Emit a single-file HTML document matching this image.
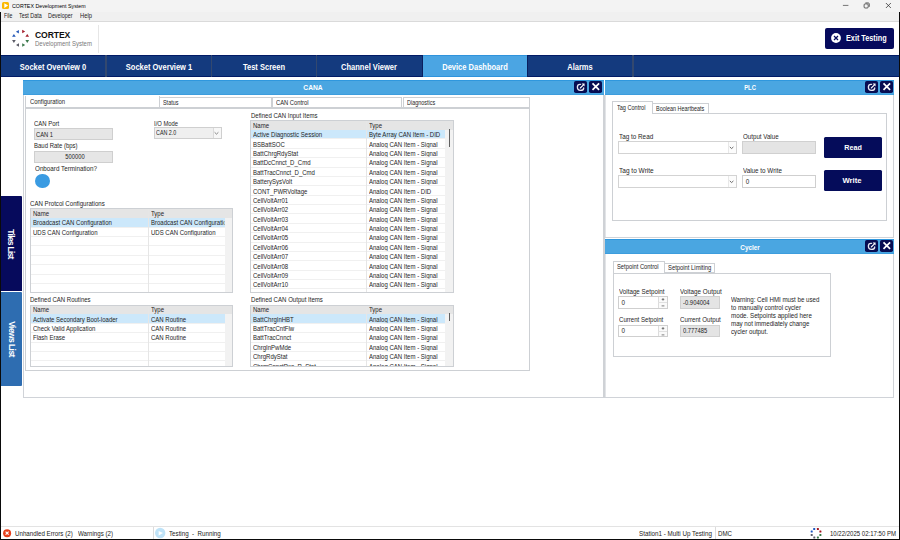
<!DOCTYPE html>
<html><head><meta charset="utf-8"><title>CORTEX Development System</title>
<style>
html,body{margin:0;padding:0;}
body{width:900px;height:540px;position:relative;overflow:hidden;background:#fff;font-family:"Liberation Sans", sans-serif;}
body div{position:absolute;}
.t{white-space:nowrap;}
svg{overflow:visible}
</style></head><body>
<div style="left:0.00px;top:0.00px;width:900.00px;height:11.60px;background:#f3f3f3"></div>
<div style="left:2.00px;top:2.00px;width:7.40px;height:7.40px;background:#fbb800;border-radius:1.5px"></div>
<svg style="position:absolute;left:2px;top:2px" width="8" height="8" viewBox="0 0 8 8"><path d="M2.3 1.3 L6.1 3.6 L2.3 5.9 Z" fill="#fff"/></svg>
<div class="t" style="left:11.90px;top:3.67px;font-size:5.7px;line-height:5.7px;color:#000;font-weight:normal;transform-origin:0 0;transform:scaleX(0.9289);">CORTEX Development System</div>
<svg style="position:absolute;left:830px;top:0" width="70" height="12" viewBox="830 0 70 12"><path d="M842.9 5.4 H848.4" stroke="#4a4a4a" stroke-width="0.75"/><rect x="864.1" y="3.9" width="4.1" height="4.1" rx="1" fill="none" stroke="#3c3c3c" stroke-width="0.8"/><path d="M865.4 2.9 H868.2 Q869.3 2.9 869.3 4 V6.8" fill="none" stroke="#3c3c3c" stroke-width="0.75"/><path d="M885.9 3 L890.9 8 M890.9 3 L885.9 8" stroke="#2c2c2c" stroke-width="0.75"/></svg>
<div style="left:0.00px;top:11.60px;width:900.00px;height:9.40px;background:#f0f0f0"></div>
<div style="left:0.00px;top:21.00px;width:900.00px;height:1.00px;background:#dadada"></div>
<div class="t" style="left:4.20px;top:12.87px;font-size:6.3px;line-height:6.3px;color:#1a1a1a;font-weight:normal;transform-origin:0 0;transform:scaleX(0.8172);">File</div>
<div class="t" style="left:19.20px;top:12.87px;font-size:6.3px;line-height:6.3px;color:#1a1a1a;font-weight:normal;transform-origin:0 0;transform:scaleX(0.8531);">Test Data</div>
<div class="t" style="left:48.30px;top:12.87px;font-size:6.3px;line-height:6.3px;color:#1a1a1a;font-weight:normal;transform-origin:0 0;transform:scaleX(0.8536);">Developer</div>
<div class="t" style="left:79.80px;top:12.87px;font-size:6.3px;line-height:6.3px;color:#1a1a1a;font-weight:normal;transform-origin:0 0;transform:scaleX(0.9187);">Help</div>
<div style="left:0.00px;top:22.00px;width:900.00px;height:33.00px;background:#ffffff"></div>
<div style="left:97.60px;top:25.00px;width:1.00px;height:27.50px;background:#e6e6e6"></div>
<svg style="position:absolute;left:0;top:21px" width="40" height="34" viewBox="0 21 40 34"><path d="M18.9 30.0 L18.9 33.5 L15.9 31.75 Z" fill="#2458b8"/><path d="M12.05 36.8 L15.75 36.8 L13.9 33.9 Z" fill="#2458b8"/><path d="M22.200000000000003 29.75 L22.200000000000003 33.25 L25.200000000000003 31.5 Z" fill="#a31f2c"/><path d="M25.4 36.8 L29.1 36.8 L27.25 33.9 Z" fill="#a31f2c"/><path d="M12.05 40.0 L15.75 40.0 L13.9 42.9 Z" fill="#5b5b66"/><path d="M19.0 43.15 L19.0 46.65 L16.0 44.9 Z" fill="#5b5b66"/><path d="M25.4 40.0 L29.1 40.0 L27.25 42.9 Z" fill="#3d7a4d"/><path d="M22.200000000000003 43.15 L22.200000000000003 46.65 L25.200000000000003 44.9 Z" fill="#3d7a4d"/></svg>
<div class="t" style="left:35.00px;top:31.12px;font-size:8.6px;line-height:8.6px;color:#101010;font-weight:bold;letter-spacing:-0.1px">CORTEX</div>
<div class="t" style="left:35.30px;top:41.27px;font-size:6.3px;line-height:6.3px;color:#7a7a7a;font-weight:normal;transform-origin:0 0;transform:scaleX(0.9506);">Development System</div>
<div style="left:825.20px;top:27.80px;width:68.60px;height:20.90px;background:#060a5c;border-radius:2px"></div>
<svg style="position:absolute;left:830px;top:32px" width="12" height="12" viewBox="0 0 12 12"><circle cx="6" cy="6" r="4.9" fill="#fff"/><path d="M4.0 4.0 L8.0 8.0 M8.0 4.0 L4.0 8.0" stroke="#060a5c" stroke-width="1.25"/></svg>
<div class="t" style="left:845.80px;top:34.38px;font-size:9px;line-height:9px;color:#ffffff;font-weight:bold;transform-origin:0 0;transform:scaleX(0.8065);">Exit Testing</div>
<div style="left:1.00px;top:55.00px;width:898.00px;height:22.20px;background:#143a7e"></div>
<div style="left:1.00px;top:55.00px;width:898.00px;height:1.20px;background:#021b66"></div>
<div style="left:1.00px;top:76.10px;width:898.00px;height:1.10px;background:#021b66"></div>
<div class="t" style="left:-96.60px;top:62.88px;width:300px;text-align:center;font-size:9px;line-height:9px;color:#ffffff;font-weight:bold;transform:scaleX(0.835)">Socket Overview 0</div>
<div class="t" style="left:8.50px;top:62.88px;width:300px;text-align:center;font-size:9px;line-height:9px;color:#ffffff;font-weight:bold;transform:scaleX(0.835)">Socket Overview 1</div>
<div class="t" style="left:113.90px;top:62.88px;width:300px;text-align:center;font-size:9px;line-height:9px;color:#ffffff;font-weight:bold;transform:scaleX(0.835)">Test Screen</div>
<div class="t" style="left:219.40px;top:62.88px;width:300px;text-align:center;font-size:9px;line-height:9px;color:#ffffff;font-weight:bold;transform:scaleX(0.835)">Channel Viewer</div>
<div style="left:422.20px;top:55.00px;width:105.40px;height:22.20px;background:#4ba5e3"></div>
<div style="left:422.20px;top:55.00px;width:105.40px;height:1.20px;background:#2f93dc"></div>
<div style="left:422.20px;top:76.10px;width:105.40px;height:1.10px;background:#2f93dc"></div>
<div class="t" style="left:324.90px;top:62.88px;width:300px;text-align:center;font-size:9px;line-height:9px;color:#ffffff;font-weight:bold;transform:scaleX(0.835)">Device Dashboard</div>
<div class="t" style="left:430.30px;top:62.88px;width:300px;text-align:center;font-size:9px;line-height:9px;color:#ffffff;font-weight:bold;transform:scaleX(0.835)">Alarms</div>
<div style="left:105.20px;top:55.00px;width:1.40px;height:22.20px;background:#33486f"></div>
<div style="left:210.60px;top:55.00px;width:1.40px;height:22.20px;background:#33486f"></div>
<div style="left:316.00px;top:55.00px;width:1.40px;height:22.20px;background:#33486f"></div>
<div style="left:421.60px;top:55.00px;width:1.40px;height:22.20px;background:#0a1f5e"></div>
<div style="left:527.00px;top:55.00px;width:1.40px;height:22.20px;background:#0a1f5e"></div>
<div style="left:632.40px;top:55.00px;width:1.40px;height:22.20px;background:#33486f"></div>
<div style="left:0.00px;top:11.70px;width:1.10px;height:528.30px;background:#0a0a0a"></div>
<div style="left:898.80px;top:11.70px;width:1.20px;height:528.30px;background:#0a0a0a"></div>
<div style="left:0.00px;top:538.80px;width:900.00px;height:1.20px;background:#0a0a0a"></div>
<div style="left:1.10px;top:526.00px;width:897.70px;height:1.00px;background:#e3e3e3"></div>
<svg style="position:absolute;left:2px;top:528px" width="11" height="11" viewBox="0 0 11 11"><circle cx="5.1" cy="5.2" r="4" fill="#e8401c"/><path d="M3.6 3.7 L6.6 6.7 M6.6 3.7 L3.6 6.7" stroke="#fff" stroke-width="1.2"/></svg>
<div class="t" style="left:15.30px;top:531.07px;font-size:6.3px;line-height:6.3px;color:#222;font-weight:normal;transform-origin:0 0;transform:scaleX(0.9813);">Unhandled Errors (2)</div>
<div class="t" style="left:78.00px;top:531.07px;font-size:6.3px;line-height:6.3px;color:#222;font-weight:normal;transform-origin:0 0;transform:scaleX(0.9773);">Warnings (2)</div>
<div style="left:152.50px;top:527.00px;width:1.00px;height:11.80px;background:#dcdcdc"></div>
<svg style="position:absolute;left:150px;top:524px" width="20" height="16" viewBox="150 524 20 16"><circle cx="160.2" cy="533" r="5.2" fill="#bfe3f8"/><path d="M158.7 530.9 L163 533.1 L158.7 535.4 Z" fill="#fff"/></svg>
<div class="t" style="left:169.30px;top:531.07px;font-size:6.3px;line-height:6.3px;color:#222;font-weight:normal;transform-origin:0 0;transform:scaleX(0.9845);">Testing&nbsp;&nbsp;-&nbsp;&nbsp;Running</div>
<div class="t" style="left:638.70px;top:531.07px;font-size:6.3px;line-height:6.3px;color:#222;font-weight:normal;transform-origin:0 0;transform:scaleX(0.9933);">Station1 - Multi Up Testing</div>
<div style="left:714.80px;top:527.00px;width:1.00px;height:11.80px;background:#dcdcdc"></div>
<div class="t" style="left:718.00px;top:531.07px;font-size:6.3px;line-height:6.3px;color:#222;font-weight:normal;transform-origin:0 0;transform:scaleX(0.9760);">DMC</div>
<svg style="position:absolute;left:808px;top:526px" width="16" height="14" viewBox="808 526 16 14"><rect x="813.2" y="528.0" width="2" height="2" rx="0.5" fill="#1a55c0"/><rect x="810.7" y="530.6" width="2" height="2" rx="0.5" fill="#1a55c0"/><rect x="816.9" y="527.9" width="2" height="2" rx="0.5" fill="#a3101c"/><rect x="819.4" y="530.6" width="2" height="2" rx="0.5" fill="#a3101c"/><rect x="810.7" y="534.1" width="2" height="2" rx="0.5" fill="#5e5e6c"/><rect x="813.3" y="536.5" width="2" height="2" rx="0.5" fill="#5e5e6c"/><rect x="819.4" y="534.1" width="2" height="2" rx="0.5" fill="#3a7a48"/><rect x="816.9" y="536.5" width="2" height="2" rx="0.5" fill="#3a7a48"/></svg>
<div class="t" style="left:830.00px;top:531.07px;font-size:6.3px;line-height:6.3px;color:#222;font-weight:normal;transform-origin:0 0;transform:scaleX(0.9567);">10/22/2025 02:17:50 PM</div>
<div style="left:1.10px;top:196.30px;width:20.90px;height:94.70px;background:#060a5c;border-radius:0 1px 0 0"></div>
<div style="left:1.10px;top:291.50px;width:20.90px;height:94.50px;background:#2e6db1;border-radius:0 1px 1px 0"></div>
<div style="left:-29.10px;top:233.90px;width:80px;height:20px;transform:rotate(90deg)"><div class="t" style="left:0;top:5.86px;width:80px;text-align:center;font-size:8.5px;line-height:8.5px;color:#fff;font-weight:bold;letter-spacing:-0.730px">Tiles List</div></div>
<div style="left:-28.50px;top:328.50px;width:80px;height:20px;transform:rotate(90deg)"><div class="t" style="left:0;top:5.86px;width:80px;text-align:center;font-size:8.5px;line-height:8.5px;color:#fff;font-weight:bold;letter-spacing:-0.582px">Views List</div></div>
<div style="left:23.00px;top:95.00px;width:581.20px;height:302.80px;background:#fff;border:1px solid #d0d3d8;border-top:none;box-sizing:border-box"></div>
<div style="left:23.00px;top:80.00px;width:580.70px;height:15.00px;background:#4aa6e1"></div>
<div style="left:23.00px;top:80.00px;width:580.70px;height:1.00px;background:#2f97dd"></div>
<div style="left:23.00px;top:93.80px;width:580.70px;height:1.20px;background:#3d9ddd"></div>
<div class="t" style="left:163.35px;top:84.13px;width:300px;text-align:center;font-size:8px;line-height:8px;color:#ffffff;font-weight:bold;transform:scaleX(0.8352);">CANA</div>
<div style="left:574.30px;top:81.10px;width:13.20px;height:12.00px;background:#070d52;border-radius:1.8px"></div>
<div style="left:589.10px;top:81.10px;width:13.40px;height:12.00px;background:#070d52;border-radius:1.8px"></div>
<svg style="position:absolute;left:574.30px;top:81.10px" width="14" height="12" viewBox="0 0 14 12"><path d="M6.6 3.3 H5.9 Q3.4 3.3 3.4 6.1 Q3.4 9.4 6.4 9.4 Q9.7 9.4 9.7 6.9" fill="none" stroke="#e8e8f0" stroke-width="1.35" stroke-linecap="round"/><path d="M6.3 7 L9.2 4.1" stroke="#fff" stroke-width="1.1" stroke-linecap="round"/><path d="M7.6 2.5 L10.6 2.4 L10.5 5.4 Z" fill="#fff"/></svg>
<svg style="position:absolute;left:589.10px;top:81.10px" width="14" height="12" viewBox="0 0 14 12"><path d="M3.5 2.3 L10.1 8.9 M10.1 2.3 L3.5 8.9" stroke="#fff" stroke-width="1.7"/></svg>
<div style="left:604.20px;top:95.00px;width:290.00px;height:143.00px;background:#fff;border:1px solid #d0d3d8;border-top:none;box-sizing:border-box"></div>
<div style="left:605.20px;top:80.00px;width:289.00px;height:15.00px;background:#4aa6e1"></div>
<div style="left:605.20px;top:80.00px;width:289.00px;height:1.00px;background:#2f97dd"></div>
<div style="left:605.20px;top:93.80px;width:289.00px;height:1.20px;background:#3d9ddd"></div>
<div class="t" style="left:599.70px;top:84.13px;width:300px;text-align:center;font-size:8px;line-height:8px;color:#ffffff;font-weight:bold;transform:scaleX(0.7312);">PLC</div>
<div style="left:864.80px;top:81.10px;width:13.20px;height:12.00px;background:#070d52;border-radius:1.8px"></div>
<div style="left:879.60px;top:81.10px;width:13.40px;height:12.00px;background:#070d52;border-radius:1.8px"></div>
<svg style="position:absolute;left:864.80px;top:81.10px" width="14" height="12" viewBox="0 0 14 12"><path d="M6.6 3.3 H5.9 Q3.4 3.3 3.4 6.1 Q3.4 9.4 6.4 9.4 Q9.7 9.4 9.7 6.9" fill="none" stroke="#e8e8f0" stroke-width="1.35" stroke-linecap="round"/><path d="M6.3 7 L9.2 4.1" stroke="#fff" stroke-width="1.1" stroke-linecap="round"/><path d="M7.6 2.5 L10.6 2.4 L10.5 5.4 Z" fill="#fff"/></svg>
<svg style="position:absolute;left:879.60px;top:81.10px" width="14" height="12" viewBox="0 0 14 12"><path d="M3.5 2.3 L10.1 8.9 M10.1 2.3 L3.5 8.9" stroke="#fff" stroke-width="1.7"/></svg>
<div style="left:604.20px;top:254.40px;width:290.00px;height:143.40px;background:#fff;border:1px solid #d0d3d8;border-top:none;box-sizing:border-box"></div>
<div style="left:605.20px;top:239.00px;width:289.00px;height:15.40px;background:#4aa6e1"></div>
<div style="left:605.20px;top:239.00px;width:289.00px;height:1.00px;background:#2f97dd"></div>
<div style="left:605.20px;top:253.20px;width:289.00px;height:1.20px;background:#3d9ddd"></div>
<div class="t" style="left:599.70px;top:243.83px;width:300px;text-align:center;font-size:8px;line-height:8px;color:#ffffff;font-weight:bold;transform:scaleX(0.7928);">Cycler</div>
<div style="left:864.80px;top:240.10px;width:13.20px;height:12.40px;background:#070d52;border-radius:1.8px"></div>
<div style="left:879.60px;top:240.10px;width:13.40px;height:12.40px;background:#070d52;border-radius:1.8px"></div>
<svg style="position:absolute;left:864.80px;top:240.10px" width="14" height="12" viewBox="0 0 14 12"><path d="M6.6 3.3 H5.9 Q3.4 3.3 3.4 6.1 Q3.4 9.4 6.4 9.4 Q9.7 9.4 9.7 6.9" fill="none" stroke="#e8e8f0" stroke-width="1.35" stroke-linecap="round"/><path d="M6.3 7 L9.2 4.1" stroke="#fff" stroke-width="1.1" stroke-linecap="round"/><path d="M7.6 2.5 L10.6 2.4 L10.5 5.4 Z" fill="#fff"/></svg>
<svg style="position:absolute;left:879.60px;top:240.10px" width="14" height="12" viewBox="0 0 14 12"><path d="M3.5 2.3 L10.1 8.9 M10.1 2.3 L3.5 8.9" stroke="#fff" stroke-width="1.7"/></svg>
<div style="left:603.00px;top:95.00px;width:2.00px;height:302.80px;background:#cfd2d6"></div>
<div style="left:605.00px;top:95.00px;width:1.00px;height:142.40px;background:#e2e4e7"></div>
<div style="left:605.00px;top:254.40px;width:1.00px;height:143.00px;background:#e2e4e7"></div>
<div style="left:25.30px;top:108.00px;width:504.70px;height:262.50px;background:#fff;border:1px solid #cdd0d4;box-sizing:border-box"></div>
<div style="left:159.30px;top:97.20px;width:112.70px;height:11.20px;background:#fff;border:1px solid #cdd0d4;box-sizing:border-box"></div>
<div style="left:271.60px;top:97.20px;width:130.90px;height:11.20px;background:#fff;border:1px solid #cdd0d4;box-sizing:border-box"></div>
<div style="left:402.50px;top:97.20px;width:127.50px;height:11.20px;background:#fff;border:1px solid #cdd0d4;box-sizing:border-box"></div>
<div style="left:25.30px;top:96.00px;width:134.50px;height:12.40px;background:#fff;border:1px solid #cdd0d4;border-top:none;box-sizing:border-box"></div>
<div style="left:25.30px;top:107.40px;width:504.70px;height:1.00px;background:#cdd0d4"></div>
<div class="t" style="left:29.80px;top:99.01px;font-size:6.3px;line-height:6.3px;color:#1e1e1e;font-weight:normal;transform-origin:0 0;transform:scaleX(0.9368);">Configuration</div>
<div class="t" style="left:163.30px;top:99.91px;font-size:6.3px;line-height:6.3px;color:#1e1e1e;font-weight:normal;transform-origin:0 0;transform:scaleX(0.8623);">Status</div>
<div class="t" style="left:276.40px;top:99.81px;font-size:6.3px;line-height:6.3px;color:#1e1e1e;font-weight:normal;transform-origin:0 0;transform:scaleX(0.9195);">CAN Control</div>
<div class="t" style="left:406.70px;top:99.91px;font-size:6.3px;line-height:6.3px;color:#1e1e1e;font-weight:normal;transform-origin:0 0;transform:scaleX(0.8691);">Diagnostics</div>
<div class="t" style="left:34.20px;top:121.21px;font-size:6.3px;line-height:6.3px;color:#1e1e1e;font-weight:normal;transform-origin:0 0;transform:scaleX(0.9476);">CAN Port</div>
<div style="left:33.90px;top:128.30px;width:78.80px;height:12.20px;background:#e6e6e6;border:1px solid #cfcfcf;box-sizing:border-box"></div>
<div class="t" style="left:36.20px;top:131.71px;font-size:6.3px;line-height:6.3px;color:#1e1e1e;font-weight:normal;transform-origin:0 0;transform:scaleX(0.9166);">CAN 1</div>
<div class="t" style="left:34.00px;top:143.41px;font-size:6.3px;line-height:6.3px;color:#1e1e1e;font-weight:normal;transform-origin:0 0;transform:scaleX(0.9507);">Baud Rate (bps)</div>
<div style="left:33.90px;top:150.60px;width:78.80px;height:12.10px;background:#e6e6e6;border:1px solid #cfcfcf;box-sizing:border-box"></div>
<div class="t" style="left:44.65px;top:153.87px;width:60px;text-align:center;font-size:6.3px;line-height:6.3px;color:#1e1e1e;font-weight:normal;transform:scaleX(0.9184);">500000</div>
<div class="t" style="left:35.00px;top:166.31px;font-size:6.3px;line-height:6.3px;color:#1e1e1e;font-weight:normal;transform-origin:0 0;transform:scaleX(0.9967);">Onboard Termination?</div>
<div style="left:35px;top:174px;width:14.6px;height:14.4px;border-radius:50%;background:#3a9be2"></div>
<div class="t" style="left:153.90px;top:120.81px;font-size:6.3px;line-height:6.3px;color:#1e1e1e;font-weight:normal;transform-origin:0 0;transform:scaleX(0.9303);">I/O Mode</div>
<div style="left:153.70px;top:127.00px;width:68.00px;height:12.20px;background:#efefef;border:1px solid #cfcfcf;box-sizing:border-box"></div>
<div style="left:212.60px;top:128.00px;width:8.10px;height:10.20px;background:#f7f7f7;border-left:1px solid #dadada;box-sizing:border-box"></div>
<svg style="position:absolute;left:212px;top:128px" width="9" height="10" viewBox="0 0 9 10"><path d="M2.6 4.3 L4.5 6.1 L6.4 4.3" fill="none" stroke="#555" stroke-width="0.7"/></svg>
<div class="t" style="left:155.60px;top:129.61px;font-size:6.3px;line-height:6.3px;color:#1e1e1e;font-weight:normal;transform-origin:0 0;transform:scaleX(0.8525);">CAN 2.0</div>
<div class="t" style="left:30.40px;top:200.91px;font-size:6.3px;line-height:6.3px;color:#1e1e1e;font-weight:normal;transform-origin:0 0;transform:scaleX(0.9714);">CAN Protcol Configurations</div>
<div style="left:29.9px;top:208.4px;width:203.40px;height:84.60px;background:#fff;overflow:hidden">
<div style="left:0;top:0;width:203.40px;height:9.45px;background:#e5e5e5"></div>
<div style="left:195.10px;top:9.45px;width:8.3px;height:84.60px;background:#f2f2f2"></div>
<div class="t" style="left:3.10px;top:2.64px;font-size:6.3px;line-height:6.3px;transform-origin:0 0;transform:scaleX(0.955);color:#1e1e1e">Name</div>
<div class="t" style="left:121.10px;top:2.64px;font-size:6.3px;line-height:6.3px;transform-origin:0 0;transform:scaleX(0.955);color:#1e1e1e">Type</div>
<div style="left:0;top:9.45px;width:195.10px;height:9.38px;background:#cce8fb"></div>
<div style="left:0;top:18.23px;width:195.10px;height:1px;background:#f0f0f0"></div>
<div class="t" style="left:3.10px;top:12.05px;font-size:6.3px;line-height:6.3px;transform-origin:0 0;transform:scaleX(0.955);color:#1e1e1e">Broadcast CAN Configuration</div>
<div class="t" style="left:121.10px;top:12.05px;width:77.49px;overflow:hidden;font-size:6.3px;line-height:6.3px;transform-origin:0 0;transform:scaleX(0.955);color:#1e1e1e">Broadcast CAN Configuration</div>
<div style="left:0;top:27.61px;width:195.10px;height:1px;background:#f0f0f0"></div>
<div class="t" style="left:3.10px;top:21.43px;font-size:6.3px;line-height:6.3px;transform-origin:0 0;transform:scaleX(0.955);color:#1e1e1e">UDS CAN Configuration</div>
<div class="t" style="left:121.10px;top:21.43px;width:77.49px;overflow:hidden;font-size:6.3px;line-height:6.3px;transform-origin:0 0;transform:scaleX(0.955);color:#1e1e1e">UDS CAN Configuration</div>
<div style="left:0;top:36.99px;width:195.10px;height:1px;background:#f0f0f0"></div>
<div style="left:0;top:46.37px;width:195.10px;height:1px;background:#f0f0f0"></div>
<div style="left:0;top:55.75px;width:195.10px;height:1px;background:#f0f0f0"></div>
<div style="left:0;top:65.13px;width:195.10px;height:1px;background:#f0f0f0"></div>
<div style="left:0;top:74.51px;width:195.10px;height:1px;background:#f0f0f0"></div>
<div style="left:0;top:83.89px;width:195.10px;height:1px;background:#f0f0f0"></div>
<div style="left:0;top:93.27px;width:195.10px;height:1px;background:#f0f0f0"></div>
<div style="left:118.10px;top:0;width:1px;height:84.60px;background:#e6e6e6"></div>
<div style="left:0;top:0;width:203.40px;height:84.60px;border:1px solid #cdd0d4;box-sizing:border-box"></div>
</div>
<div class="t" style="left:30.40px;top:297.11px;font-size:6.3px;line-height:6.3px;color:#1e1e1e;font-weight:normal;transform-origin:0 0;transform:scaleX(0.9564);">Defined CAN Routines</div>
<div style="left:29.9px;top:304.7px;width:203.40px;height:62.10px;background:#fff;overflow:hidden">
<div style="left:0;top:0;width:203.40px;height:9.45px;background:#e5e5e5"></div>
<div style="left:195.10px;top:9.45px;width:8.3px;height:62.10px;background:#f2f2f2"></div>
<div class="t" style="left:3.10px;top:2.64px;font-size:6.3px;line-height:6.3px;transform-origin:0 0;transform:scaleX(0.955);color:#1e1e1e">Name</div>
<div class="t" style="left:121.10px;top:2.64px;font-size:6.3px;line-height:6.3px;transform-origin:0 0;transform:scaleX(0.955);color:#1e1e1e">Type</div>
<div style="left:0;top:9.45px;width:195.10px;height:9.38px;background:#cce8fb"></div>
<div style="left:0;top:18.23px;width:195.10px;height:1px;background:#f0f0f0"></div>
<div class="t" style="left:3.10px;top:12.05px;font-size:6.3px;line-height:6.3px;transform-origin:0 0;transform:scaleX(0.955);color:#1e1e1e">Activate Secondary Boot-loader</div>
<div class="t" style="left:121.10px;top:12.05px;width:77.49px;overflow:hidden;font-size:6.3px;line-height:6.3px;transform-origin:0 0;transform:scaleX(0.955);color:#1e1e1e">CAN Routine</div>
<div style="left:0;top:27.61px;width:195.10px;height:1px;background:#f0f0f0"></div>
<div class="t" style="left:3.10px;top:21.43px;font-size:6.3px;line-height:6.3px;transform-origin:0 0;transform:scaleX(0.955);color:#1e1e1e">Check Valid Application</div>
<div class="t" style="left:121.10px;top:21.43px;width:77.49px;overflow:hidden;font-size:6.3px;line-height:6.3px;transform-origin:0 0;transform:scaleX(0.955);color:#1e1e1e">CAN Routine</div>
<div style="left:0;top:36.99px;width:195.10px;height:1px;background:#f0f0f0"></div>
<div class="t" style="left:3.10px;top:30.81px;font-size:6.3px;line-height:6.3px;transform-origin:0 0;transform:scaleX(0.955);color:#1e1e1e">Flash Erase</div>
<div class="t" style="left:121.10px;top:30.81px;width:77.49px;overflow:hidden;font-size:6.3px;line-height:6.3px;transform-origin:0 0;transform:scaleX(0.955);color:#1e1e1e">CAN Routine</div>
<div style="left:0;top:46.37px;width:195.10px;height:1px;background:#f0f0f0"></div>
<div style="left:0;top:55.75px;width:195.10px;height:1px;background:#f0f0f0"></div>
<div style="left:0;top:65.13px;width:195.10px;height:1px;background:#f0f0f0"></div>
<div style="left:118.10px;top:0;width:1px;height:62.10px;background:#e6e6e6"></div>
<div style="left:0;top:0;width:203.40px;height:62.10px;border:1px solid #cdd0d4;box-sizing:border-box"></div>
</div>
<div class="t" style="left:250.60px;top:112.71px;font-size:6.3px;line-height:6.3px;color:#1e1e1e;font-weight:normal;transform-origin:0 0;transform:scaleX(0.9547);">Defined CAN Input Items</div>
<div style="left:250.2px;top:120.2px;width:203.40px;height:173.00px;background:#fff;overflow:hidden">
<div style="left:0;top:0;width:203.40px;height:9.45px;background:#e5e5e5"></div>
<div style="left:195.10px;top:9.45px;width:8.3px;height:173.00px;background:#f2f2f2"></div>
<div class="t" style="left:3.10px;top:2.64px;font-size:6.3px;line-height:6.3px;transform-origin:0 0;transform:scaleX(0.955);color:#1e1e1e">Name</div>
<div class="t" style="left:118.80px;top:2.64px;font-size:6.3px;line-height:6.3px;transform-origin:0 0;transform:scaleX(0.955);color:#1e1e1e">Type</div>
<div style="left:0;top:9.45px;width:195.10px;height:9.38px;background:#cce8fb"></div>
<div style="left:0;top:18.23px;width:195.10px;height:1px;background:#f0f0f0"></div>
<div class="t" style="left:3.10px;top:12.05px;font-size:6.3px;line-height:6.3px;transform-origin:0 0;transform:scaleX(0.955);color:#1e1e1e">Active Diagnostic Session</div>
<div class="t" style="left:118.80px;top:12.05px;width:79.90px;overflow:hidden;font-size:6.3px;line-height:6.3px;transform-origin:0 0;transform:scaleX(0.955);color:#1e1e1e">Byte Array CAN Item - DID</div>
<div style="left:0;top:27.61px;width:195.10px;height:1px;background:#f0f0f0"></div>
<div class="t" style="left:3.10px;top:21.43px;font-size:6.3px;line-height:6.3px;transform-origin:0 0;transform:scaleX(0.955);color:#1e1e1e">BSBattSOC</div>
<div class="t" style="left:118.80px;top:21.43px;width:79.90px;overflow:hidden;font-size:6.3px;line-height:6.3px;transform-origin:0 0;transform:scaleX(0.955);color:#1e1e1e">Analog CAN Item - Signal</div>
<div style="left:0;top:36.99px;width:195.10px;height:1px;background:#f0f0f0"></div>
<div class="t" style="left:3.10px;top:30.81px;font-size:6.3px;line-height:6.3px;transform-origin:0 0;transform:scaleX(0.955);color:#1e1e1e">BattChrgRdyStat</div>
<div class="t" style="left:118.80px;top:30.81px;width:79.90px;overflow:hidden;font-size:6.3px;line-height:6.3px;transform-origin:0 0;transform:scaleX(0.955);color:#1e1e1e">Analog CAN Item - Signal</div>
<div style="left:0;top:46.37px;width:195.10px;height:1px;background:#f0f0f0"></div>
<div class="t" style="left:3.10px;top:40.19px;font-size:6.3px;line-height:6.3px;transform-origin:0 0;transform:scaleX(0.955);color:#1e1e1e">BattDcCnnct_D_Cmd</div>
<div class="t" style="left:118.80px;top:40.19px;width:79.90px;overflow:hidden;font-size:6.3px;line-height:6.3px;transform-origin:0 0;transform:scaleX(0.955);color:#1e1e1e">Analog CAN Item - Signal</div>
<div style="left:0;top:55.75px;width:195.10px;height:1px;background:#f0f0f0"></div>
<div class="t" style="left:3.10px;top:49.57px;font-size:6.3px;line-height:6.3px;transform-origin:0 0;transform:scaleX(0.955);color:#1e1e1e">BattTracCnnct_D_Cmd</div>
<div class="t" style="left:118.80px;top:49.57px;width:79.90px;overflow:hidden;font-size:6.3px;line-height:6.3px;transform-origin:0 0;transform:scaleX(0.955);color:#1e1e1e">Analog CAN Item - Signal</div>
<div style="left:0;top:65.13px;width:195.10px;height:1px;background:#f0f0f0"></div>
<div class="t" style="left:3.10px;top:58.95px;font-size:6.3px;line-height:6.3px;transform-origin:0 0;transform:scaleX(0.955);color:#1e1e1e">BatterySysVolt</div>
<div class="t" style="left:118.80px;top:58.95px;width:79.90px;overflow:hidden;font-size:6.3px;line-height:6.3px;transform-origin:0 0;transform:scaleX(0.955);color:#1e1e1e">Analog CAN Item - Signal</div>
<div style="left:0;top:74.51px;width:195.10px;height:1px;background:#f0f0f0"></div>
<div class="t" style="left:3.10px;top:68.33px;font-size:6.3px;line-height:6.3px;transform-origin:0 0;transform:scaleX(0.955);color:#1e1e1e">CONT_PWRVoltage</div>
<div class="t" style="left:118.80px;top:68.33px;width:79.90px;overflow:hidden;font-size:6.3px;line-height:6.3px;transform-origin:0 0;transform:scaleX(0.955);color:#1e1e1e">Analog CAN Item - DID</div>
<div style="left:0;top:83.89px;width:195.10px;height:1px;background:#f0f0f0"></div>
<div class="t" style="left:3.10px;top:77.71px;font-size:6.3px;line-height:6.3px;transform-origin:0 0;transform:scaleX(0.955);color:#1e1e1e">CellVoltArr01</div>
<div class="t" style="left:118.80px;top:77.71px;width:79.90px;overflow:hidden;font-size:6.3px;line-height:6.3px;transform-origin:0 0;transform:scaleX(0.955);color:#1e1e1e">Analog CAN Item - Signal</div>
<div style="left:0;top:93.27px;width:195.10px;height:1px;background:#f0f0f0"></div>
<div class="t" style="left:3.10px;top:87.09px;font-size:6.3px;line-height:6.3px;transform-origin:0 0;transform:scaleX(0.955);color:#1e1e1e">CellVoltArr02</div>
<div class="t" style="left:118.80px;top:87.09px;width:79.90px;overflow:hidden;font-size:6.3px;line-height:6.3px;transform-origin:0 0;transform:scaleX(0.955);color:#1e1e1e">Analog CAN Item - Signal</div>
<div style="left:0;top:102.65px;width:195.10px;height:1px;background:#f0f0f0"></div>
<div class="t" style="left:3.10px;top:96.47px;font-size:6.3px;line-height:6.3px;transform-origin:0 0;transform:scaleX(0.955);color:#1e1e1e">CellVoltArr03</div>
<div class="t" style="left:118.80px;top:96.47px;width:79.90px;overflow:hidden;font-size:6.3px;line-height:6.3px;transform-origin:0 0;transform:scaleX(0.955);color:#1e1e1e">Analog CAN Item - Signal</div>
<div style="left:0;top:112.03px;width:195.10px;height:1px;background:#f0f0f0"></div>
<div class="t" style="left:3.10px;top:105.85px;font-size:6.3px;line-height:6.3px;transform-origin:0 0;transform:scaleX(0.955);color:#1e1e1e">CellVoltArr04</div>
<div class="t" style="left:118.80px;top:105.85px;width:79.90px;overflow:hidden;font-size:6.3px;line-height:6.3px;transform-origin:0 0;transform:scaleX(0.955);color:#1e1e1e">Analog CAN Item - Signal</div>
<div style="left:0;top:121.41px;width:195.10px;height:1px;background:#f0f0f0"></div>
<div class="t" style="left:3.10px;top:115.23px;font-size:6.3px;line-height:6.3px;transform-origin:0 0;transform:scaleX(0.955);color:#1e1e1e">CellVoltArr05</div>
<div class="t" style="left:118.80px;top:115.23px;width:79.90px;overflow:hidden;font-size:6.3px;line-height:6.3px;transform-origin:0 0;transform:scaleX(0.955);color:#1e1e1e">Analog CAN Item - Signal</div>
<div style="left:0;top:130.79px;width:195.10px;height:1px;background:#f0f0f0"></div>
<div class="t" style="left:3.10px;top:124.61px;font-size:6.3px;line-height:6.3px;transform-origin:0 0;transform:scaleX(0.955);color:#1e1e1e">CellVoltArr06</div>
<div class="t" style="left:118.80px;top:124.61px;width:79.90px;overflow:hidden;font-size:6.3px;line-height:6.3px;transform-origin:0 0;transform:scaleX(0.955);color:#1e1e1e">Analog CAN Item - Signal</div>
<div style="left:0;top:140.17px;width:195.10px;height:1px;background:#f0f0f0"></div>
<div class="t" style="left:3.10px;top:133.99px;font-size:6.3px;line-height:6.3px;transform-origin:0 0;transform:scaleX(0.955);color:#1e1e1e">CellVoltArr07</div>
<div class="t" style="left:118.80px;top:133.99px;width:79.90px;overflow:hidden;font-size:6.3px;line-height:6.3px;transform-origin:0 0;transform:scaleX(0.955);color:#1e1e1e">Analog CAN Item - Signal</div>
<div style="left:0;top:149.55px;width:195.10px;height:1px;background:#f0f0f0"></div>
<div class="t" style="left:3.10px;top:143.37px;font-size:6.3px;line-height:6.3px;transform-origin:0 0;transform:scaleX(0.955);color:#1e1e1e">CellVoltArr08</div>
<div class="t" style="left:118.80px;top:143.37px;width:79.90px;overflow:hidden;font-size:6.3px;line-height:6.3px;transform-origin:0 0;transform:scaleX(0.955);color:#1e1e1e">Analog CAN Item - Signal</div>
<div style="left:0;top:158.93px;width:195.10px;height:1px;background:#f0f0f0"></div>
<div class="t" style="left:3.10px;top:152.75px;font-size:6.3px;line-height:6.3px;transform-origin:0 0;transform:scaleX(0.955);color:#1e1e1e">CellVoltArr09</div>
<div class="t" style="left:118.80px;top:152.75px;width:79.90px;overflow:hidden;font-size:6.3px;line-height:6.3px;transform-origin:0 0;transform:scaleX(0.955);color:#1e1e1e">Analog CAN Item - Signal</div>
<div style="left:0;top:168.31px;width:195.10px;height:1px;background:#f0f0f0"></div>
<div class="t" style="left:3.10px;top:162.13px;font-size:6.3px;line-height:6.3px;transform-origin:0 0;transform:scaleX(0.955);color:#1e1e1e">CellVoltArr10</div>
<div class="t" style="left:118.80px;top:162.13px;width:79.90px;overflow:hidden;font-size:6.3px;line-height:6.3px;transform-origin:0 0;transform:scaleX(0.955);color:#1e1e1e">Analog CAN Item - Signal</div>
<div style="left:0;top:177.69px;width:195.10px;height:1px;background:#f0f0f0"></div>
<div class="t" style="left:3.10px;top:171.51px;font-size:6.3px;line-height:6.3px;transform-origin:0 0;transform:scaleX(0.955);color:#1e1e1e">CellVoltArr11</div>
<div class="t" style="left:118.80px;top:171.51px;width:79.90px;overflow:hidden;font-size:6.3px;line-height:6.3px;transform-origin:0 0;transform:scaleX(0.955);color:#1e1e1e">Analog CAN Item - Signal</div>
<div style="left:115.80px;top:0;width:1px;height:173.00px;background:#e6e6e6"></div>
<div style="left:198.60px;top:8.50px;width:1.4px;height:18.00px;background:#606060"></div>
<div style="left:0;top:0;width:203.40px;height:173.00px;border:1px solid #cdd0d4;box-sizing:border-box"></div>
</div>
<div class="t" style="left:250.60px;top:297.11px;font-size:6.3px;line-height:6.3px;color:#1e1e1e;font-weight:normal;transform-origin:0 0;transform:scaleX(0.9645);">Defined CAN Output Items</div>
<div style="left:250.2px;top:304.7px;width:203.40px;height:62.10px;background:#fff;overflow:hidden">
<div style="left:0;top:0;width:203.40px;height:9.45px;background:#e5e5e5"></div>
<div style="left:195.10px;top:9.45px;width:8.3px;height:62.10px;background:#f2f2f2"></div>
<div class="t" style="left:3.10px;top:2.64px;font-size:6.3px;line-height:6.3px;transform-origin:0 0;transform:scaleX(0.955);color:#1e1e1e">Name</div>
<div class="t" style="left:118.80px;top:2.64px;font-size:6.3px;line-height:6.3px;transform-origin:0 0;transform:scaleX(0.955);color:#1e1e1e">Type</div>
<div style="left:0;top:9.45px;width:195.10px;height:9.38px;background:#cce8fb"></div>
<div style="left:0;top:18.23px;width:195.10px;height:1px;background:#f0f0f0"></div>
<div class="t" style="left:3.10px;top:12.05px;font-size:6.3px;line-height:6.3px;transform-origin:0 0;transform:scaleX(0.955);color:#1e1e1e">BattChrgInHBT</div>
<div class="t" style="left:118.80px;top:12.05px;width:79.90px;overflow:hidden;font-size:6.3px;line-height:6.3px;transform-origin:0 0;transform:scaleX(0.955);color:#1e1e1e">Analog CAN Item - Signal</div>
<div style="left:0;top:27.61px;width:195.10px;height:1px;background:#f0f0f0"></div>
<div class="t" style="left:3.10px;top:21.43px;font-size:6.3px;line-height:6.3px;transform-origin:0 0;transform:scaleX(0.955);color:#1e1e1e">BattTracCntFlw</div>
<div class="t" style="left:118.80px;top:21.43px;width:79.90px;overflow:hidden;font-size:6.3px;line-height:6.3px;transform-origin:0 0;transform:scaleX(0.955);color:#1e1e1e">Analog CAN Item - Signal</div>
<div style="left:0;top:36.99px;width:195.10px;height:1px;background:#f0f0f0"></div>
<div class="t" style="left:3.10px;top:30.81px;font-size:6.3px;line-height:6.3px;transform-origin:0 0;transform:scaleX(0.955);color:#1e1e1e">BattTracCnnct</div>
<div class="t" style="left:118.80px;top:30.81px;width:79.90px;overflow:hidden;font-size:6.3px;line-height:6.3px;transform-origin:0 0;transform:scaleX(0.955);color:#1e1e1e">Analog CAN Item - Signal</div>
<div style="left:0;top:46.37px;width:195.10px;height:1px;background:#f0f0f0"></div>
<div class="t" style="left:3.10px;top:40.19px;font-size:6.3px;line-height:6.3px;transform-origin:0 0;transform:scaleX(0.955);color:#1e1e1e">ChrgInPwMde</div>
<div class="t" style="left:118.80px;top:40.19px;width:79.90px;overflow:hidden;font-size:6.3px;line-height:6.3px;transform-origin:0 0;transform:scaleX(0.955);color:#1e1e1e">Analog CAN Item - Signal</div>
<div style="left:0;top:55.75px;width:195.10px;height:1px;background:#f0f0f0"></div>
<div class="t" style="left:3.10px;top:49.57px;font-size:6.3px;line-height:6.3px;transform-origin:0 0;transform:scaleX(0.955);color:#1e1e1e">ChrgRdyStat</div>
<div class="t" style="left:118.80px;top:49.57px;width:79.90px;overflow:hidden;font-size:6.3px;line-height:6.3px;transform-origin:0 0;transform:scaleX(0.955);color:#1e1e1e">Analog CAN Item - Signal</div>
<div style="left:0;top:65.13px;width:195.10px;height:1px;background:#f0f0f0"></div>
<div class="t" style="left:3.10px;top:58.95px;font-size:6.3px;line-height:6.3px;transform-origin:0 0;transform:scaleX(0.955);color:#1e1e1e">ChrgrCnnctPwr_R_Stat</div>
<div class="t" style="left:118.80px;top:58.95px;width:79.90px;overflow:hidden;font-size:6.3px;line-height:6.3px;transform-origin:0 0;transform:scaleX(0.955);color:#1e1e1e">Analog CAN Item - Signal</div>
<div style="left:115.80px;top:0;width:1px;height:62.10px;background:#e6e6e6"></div>
<div style="left:198.60px;top:8.30px;width:1.4px;height:8.30px;background:#606060"></div>
<div style="left:0;top:0;width:203.40px;height:62.10px;border:1px solid #cdd0d4;box-sizing:border-box"></div>
</div>
<div style="left:612.30px;top:113.00px;width:275.20px;height:107.80px;background:#fff;border:1px solid #cdd0d4;box-sizing:border-box"></div>
<div style="left:652.30px;top:102.60px;width:56.40px;height:11.00px;background:#fff;border:1px solid #cdd0d4;box-sizing:border-box"></div>
<div style="left:612.30px;top:101.40px;width:40.50px;height:12.20px;background:#fff;border:1px solid #cdd0d4;border-bottom:none;box-sizing:border-box"></div>
<div class="t" style="left:617.30px;top:104.61px;font-size:6.3px;line-height:6.3px;color:#1e1e1e;font-weight:normal;transform-origin:0 0;transform:scaleX(0.8819);">Tag Control</div>
<div class="t" style="left:656.00px;top:105.61px;font-size:6.3px;line-height:6.3px;color:#1e1e1e;font-weight:normal;transform-origin:0 0;transform:scaleX(0.8676);">Boolean Heartbeats</div>
<div class="t" style="left:619.00px;top:134.01px;font-size:6.3px;line-height:6.3px;color:#1e1e1e;font-weight:normal;transform-origin:0 0;transform:scaleX(1.0068);">Tag to Read</div>
<div style="left:618.20px;top:141.30px;width:118.70px;height:12.90px;background:#fff;border:1px solid #d3d3d3;box-sizing:border-box"></div>
<div style="left:727.70px;top:142.30px;width:8.20px;height:10.90px;background:#fcfcfc;border-left:1px solid #e8e8e8;box-sizing:border-box"></div>
<svg style="position:absolute;left:727.40px;top:141.30px" width="9" height="12.90" viewBox="0 0 9 12.90"><path d="M2.8 5.95 L4.6 7.55 L6.4 5.95" fill="none" stroke="#505050" stroke-width="0.85"/></svg>
<div class="t" style="left:619.00px;top:167.71px;font-size:6.3px;line-height:6.3px;color:#1e1e1e;font-weight:normal;transform-origin:0 0;transform:scaleX(1.0363);">Tag to Write</div>
<div style="left:618.20px;top:175.10px;width:118.70px;height:12.90px;background:#fff;border:1px solid #d3d3d3;box-sizing:border-box"></div>
<div style="left:727.70px;top:176.10px;width:8.20px;height:10.90px;background:#fcfcfc;border-left:1px solid #e8e8e8;box-sizing:border-box"></div>
<svg style="position:absolute;left:727.40px;top:175.10px" width="9" height="12.90" viewBox="0 0 9 12.90"><path d="M2.8 5.95 L4.6 7.55 L6.4 5.95" fill="none" stroke="#505050" stroke-width="0.85"/></svg>
<div class="t" style="left:743.10px;top:134.41px;font-size:6.3px;line-height:6.3px;color:#1e1e1e;font-weight:normal;transform-origin:0 0;transform:scaleX(0.9808);">Output Value</div>
<div style="left:742.20px;top:141.40px;width:73.40px;height:12.40px;background:#e4e4e4;border:1px solid #d0d0d0;box-sizing:border-box"></div>
<div class="t" style="left:743.10px;top:168.21px;font-size:6.3px;line-height:6.3px;color:#1e1e1e;font-weight:normal;transform-origin:0 0;transform:scaleX(0.9982);">Value to Write</div>
<div style="left:742.20px;top:175.30px;width:73.40px;height:12.30px;background:#fff;border:1px solid #cfcfcf;box-sizing:border-box"></div>
<div class="t" style="left:745.80px;top:178.71px;font-size:6.3px;line-height:6.3px;color:#1e1e1e;font-weight:normal;">0</div>
<div style="left:824.40px;top:137.40px;width:57.70px;height:21.00px;background:#050c5a;border-radius:1.5px"></div>
<div class="t" style="left:702.60px;top:144.10px;width:300px;text-align:center;font-size:7.8px;line-height:7.8px;color:#fff;font-weight:bold;transform:scaleX(0.9225);">Read</div>
<div style="left:824.40px;top:170.30px;width:57.70px;height:20.80px;background:#050c5a;border-radius:1.5px"></div>
<div class="t" style="left:702.45px;top:177.00px;width:300px;text-align:center;font-size:7.8px;line-height:7.8px;color:#fff;font-weight:bold;transform:scaleX(0.9866);">Write</div>
<div style="left:612.50px;top:272.50px;width:218.80px;height:84.50px;background:#fff;border:1px solid #cdd0d4;box-sizing:border-box"></div>
<div style="left:664.20px;top:262.50px;width:51.10px;height:10.60px;background:#fff;border:1px solid #cdd0d4;box-sizing:border-box"></div>
<div style="left:612.50px;top:261.30px;width:52.20px;height:11.80px;background:#fff;border:1px solid #cdd0d4;border-bottom:none;box-sizing:border-box"></div>
<div class="t" style="left:616.70px;top:264.01px;font-size:6.3px;line-height:6.3px;color:#1e1e1e;font-weight:normal;transform-origin:0 0;transform:scaleX(0.9212);">Setpoint Control</div>
<div class="t" style="left:667.50px;top:264.81px;font-size:6.3px;line-height:6.3px;color:#1e1e1e;font-weight:normal;transform-origin:0 0;transform:scaleX(0.9299);">Setpoint Limiting</div>
<div class="t" style="left:618.70px;top:289.01px;font-size:6.3px;line-height:6.3px;color:#1e1e1e;font-weight:normal;transform-origin:0 0;transform:scaleX(0.9918);">Voltage Setpoint</div>
<div style="left:618.00px;top:296.20px;width:50.30px;height:13.00px;background:#fff;border:1px solid #cfcfcf;box-sizing:border-box"></div>
<div style="left:658.30px;top:297.20px;width:9.00px;height:11.00px;background:#fafafa;border-left:1px solid #dcdcdc;box-sizing:border-box"></div>
<div style="left:658.30px;top:302.30px;width:9.00px;height:0.80px;background:#e0e0e0"></div>
<svg style="position:absolute;left:658.30px;top:296.20px" width="10" height="13.00" viewBox="0 0 10 13.00"><path d="M3.7 3.4 H6.3 M5 2.1 V4.7 M3.6 9.9 H6.4" stroke="#555" stroke-width="0.75"/></svg>
<div class="t" style="left:621.60px;top:300.01px;font-size:6.3px;line-height:6.3px;color:#1e1e1e;font-weight:normal;">0</div>
<div class="t" style="left:680.00px;top:289.01px;font-size:6.3px;line-height:6.3px;color:#1e1e1e;font-weight:normal;transform-origin:0 0;transform:scaleX(1.0007);">Voltage Output</div>
<div style="left:679.70px;top:296.30px;width:40.00px;height:12.40px;background:#e4e4e4;border:1px solid #d0d0d0;box-sizing:border-box"></div>
<div class="t" style="left:682.50px;top:299.81px;font-size:6.3px;line-height:6.3px;color:#1e1e1e;font-weight:normal;transform-origin:0 0;transform:scaleX(0.9339);">-0.904004</div>
<div class="t" style="left:618.70px;top:317.31px;font-size:6.3px;line-height:6.3px;color:#1e1e1e;font-weight:normal;transform-origin:0 0;transform:scaleX(0.9660);">Current Setpoint</div>
<div style="left:618.00px;top:324.70px;width:50.30px;height:12.80px;background:#fff;border:1px solid #cfcfcf;box-sizing:border-box"></div>
<div style="left:658.30px;top:325.70px;width:9.00px;height:10.80px;background:#fafafa;border-left:1px solid #dcdcdc;box-sizing:border-box"></div>
<div style="left:658.30px;top:330.70px;width:9.00px;height:0.80px;background:#e0e0e0"></div>
<svg style="position:absolute;left:658.30px;top:324.70px" width="10" height="12.80" viewBox="0 0 10 12.80"><path d="M3.7 3.4 H6.3 M5 2.1 V4.7 M3.6 9.9 H6.4" stroke="#555" stroke-width="0.75"/></svg>
<div class="t" style="left:621.60px;top:328.41px;font-size:6.3px;line-height:6.3px;color:#1e1e1e;font-weight:normal;">0</div>
<div class="t" style="left:680.00px;top:317.31px;font-size:6.3px;line-height:6.3px;color:#1e1e1e;font-weight:normal;transform-origin:0 0;transform:scaleX(0.9794);">Current Output</div>
<div style="left:679.70px;top:324.70px;width:40.00px;height:12.30px;background:#e4e4e4;border:1px solid #d0d0d0;box-sizing:border-box"></div>
<div class="t" style="left:682.50px;top:328.21px;font-size:6.3px;line-height:6.3px;color:#1e1e1e;font-weight:normal;transform-origin:0 0;transform:scaleX(0.9214);">0.777485</div>
<div class="t" style="left:730.80px;top:296.51px;font-size:6.3px;line-height:6.3px;color:#1e1e1e;font-weight:normal;transform-origin:0 0;transform:scaleX(0.9778);">Warning: Cell HMI must be used</div>
<div class="t" style="left:730.80px;top:304.51px;font-size:6.3px;line-height:6.3px;color:#1e1e1e;font-weight:normal;transform-origin:0 0;transform:scaleX(0.9853);">to manually control cycler</div>
<div class="t" style="left:730.80px;top:312.61px;font-size:6.3px;line-height:6.3px;color:#1e1e1e;font-weight:normal;transform-origin:0 0;transform:scaleX(0.9875);">mode. Setpoints applied here</div>
<div class="t" style="left:730.80px;top:320.61px;font-size:6.3px;line-height:6.3px;color:#1e1e1e;font-weight:normal;transform-origin:0 0;transform:scaleX(0.9781);">may not immediately change</div>
<div class="t" style="left:730.80px;top:328.51px;font-size:6.3px;line-height:6.3px;color:#1e1e1e;font-weight:normal;transform-origin:0 0;transform:scaleX(0.9879);">cycler output.</div>
</body></html>
